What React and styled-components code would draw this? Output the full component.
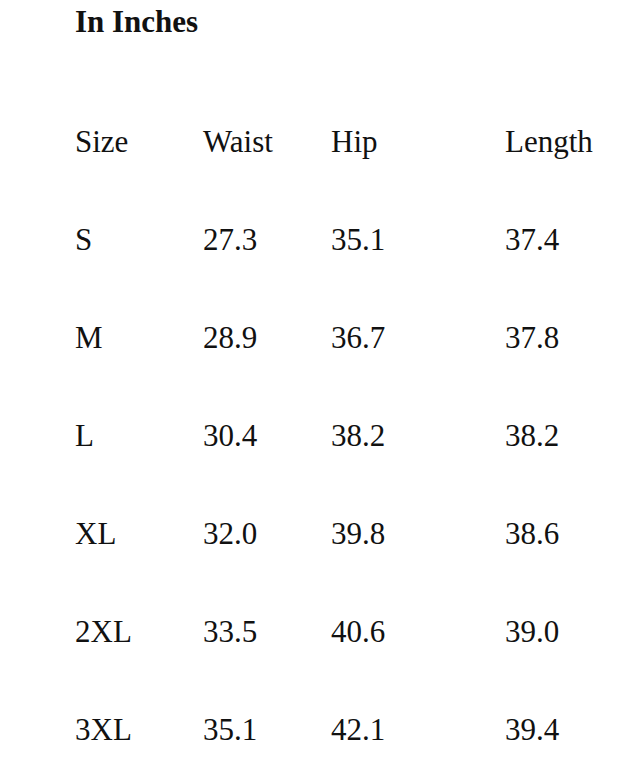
import React from 'react';
import styled, { createGlobalStyle } from 'styled-components';

const GlobalStyle = createGlobalStyle`
    body {
        margin: 0;
        background: #fff;
        color: #111;
        font-family: "Liberation Serif", "Times New Roman", serif;
    }
`;

const Page = styled.div`
    padding: 4px 0 0 75px;
`;

const Title = styled.h2`
    margin: 0 0 53px;
    font-size: 31px;
    line-height: 36px;
    font-weight: 700;
`;

const Table = styled.div`
    display: grid;
    grid-template-columns: 128px 128px 174px auto;
    grid-auto-rows: 98px;
    align-items: center;
    font-size: 31px;
`;

const Cell = styled.div`
    line-height: 98px;
    white-space: nowrap;
`;

const headers = ['Size', 'Waist', 'Hip', 'Length'];

const rows = [
    ['S', '27.3', '35.1', '37.4'],
    ['M', '28.9', '36.7', '37.8'],
    ['L', '30.4', '38.2', '38.2'],
    ['XL', '32.0', '39.8', '38.6'],
    ['2XL', '33.5', '40.6', '39.0'],
    ['3XL', '35.1', '42.1', '39.4'],
];

const App = () => {
    return (
        <>
            <GlobalStyle />
            <Page>
                <Title>In Inches</Title>

                <Table>
                    { headers.map((h) => <Cell key={ h }>{ h }</Cell>) }
                    {
                        rows.map((row) =>
                            row.map((value, i) => <Cell key={ row[0] + i }>{ value }</Cell>)
                        )
                    }
                </Table>
            </Page>
        </>
    );
};

export default App;
